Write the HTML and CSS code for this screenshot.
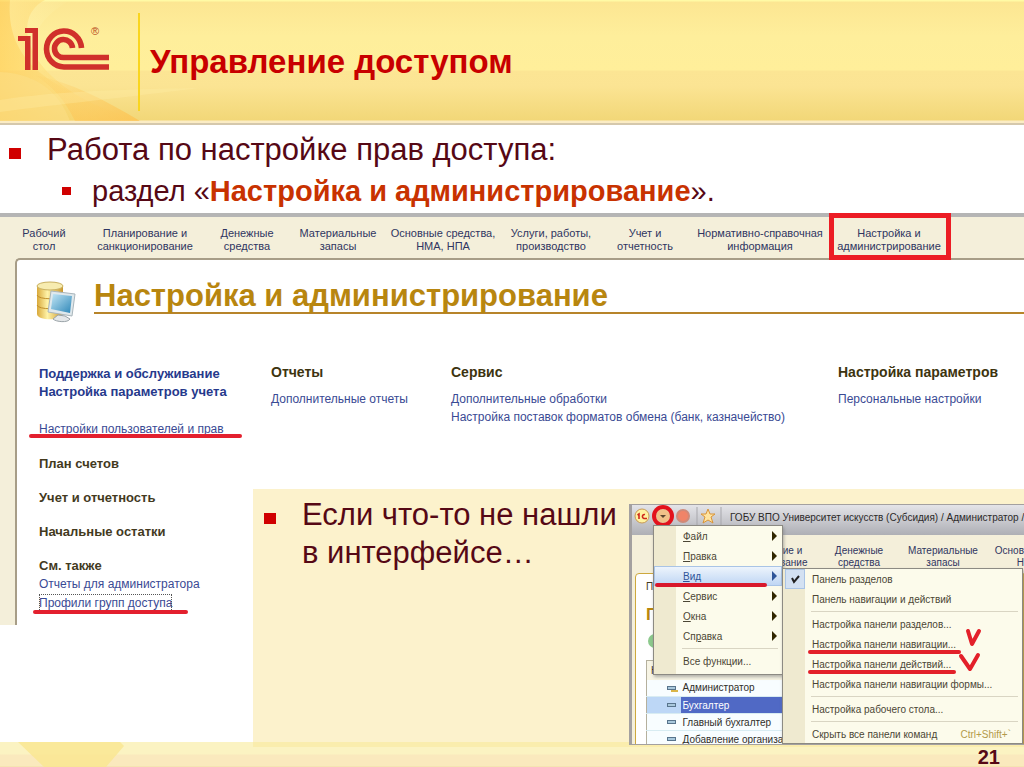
FILE: index.html
```html
<!DOCTYPE html>
<html lang="ru">
<head>
<meta charset="utf-8">
<title>Управление доступом</title>
<link rel="stylesheet" href="styles.css">
</head>
<body>
<div class="slide">
  <header class="slide-head">
    <svg class="head-art" viewBox="0 0 200 121" aria-hidden="true">
      <defs>
        <linearGradient id="fade" x1="0" x2="1"><stop offset="0" stop-color="#ffc94d" stop-opacity=".6"/><stop offset="1" stop-color="#ffd76a" stop-opacity="0"/></linearGradient>
        <linearGradient id="lightfade" x1="0" x2="1"><stop offset="0" stop-color="#fff3ae" stop-opacity=".5"/><stop offset="1" stop-color="#fff3ae" stop-opacity="0"/></linearGradient>
        <linearGradient id="lowfade" x1="0" x2="1" y1="0" y2="1"><stop offset="0" stop-color="#ffc95c" stop-opacity=".1"/><stop offset="1" stop-color="#ffc04c" stop-opacity=".7"/></linearGradient>
      </defs>
      <path d="M0 0H45C5 20 30 95 145 121H0Z" fill="url(#fade)"/>
      <path d="M10 0H70C20 30 25 60 75 95C50 80 5 60 10 0Z" fill="url(#lightfade)"/>
      <path d="M0 72C40 74 60 95 70 121H0Z" fill="#fbe08a" opacity=".5"/>
      <path d="M35 75C70 82 105 100 140 121H75C65 100 52 86 35 75Z" fill="url(#lowfade)"/>
      <path d="M0 100C40 94 80 90 200 88C120 98 60 104 0 112Z" fill="#fff0a8" opacity=".3"/>
    </svg>
    <div class="logo">
      <svg viewBox="0 0 92 44" width="92" height="44" role="img" aria-label="1С">
        <g fill="#d0302b">
          <path d="M7 0H20V42H14.500V5H7Z"/>
          <path d="M0 8H12.500V42H7V13H0Z"/>
        </g>
        <g fill="none" stroke="#d0302b" stroke-width="5.600">
          <path d="M63.500 20A17.500 18 0 1 0 46 39H91"/>
          <path d="M54.500 20A9 9 0 1 0 46 29.500H91"/>
        </g>
      </svg>
      <span class="reg">®</span>
    </div>
    <h1 class="slide-title">Управление доступом</h1>
  </header>

  <section class="intro">
    <p class="point">Работа по настройке прав доступа:</p>
    <p class="subpoint">раздел «<b>Настройка и администрирование</b>».</p>
  </section>

  <main class="stage">
    <section class="app">
      <nav class="sections">
        <a href="#">Рабочий<br>стол</a>
        <a href="#">Планирование и<br>санкционирование</a>
        <a href="#">Денежные<br>средства</a>
        <a href="#">Материальные<br>запасы</a>
        <a href="#">Основные средства,<br>НМА, НПА</a>
        <a href="#">Услуги, работы,<br>производство</a>
        <a href="#">Учет и<br>отчетность</a>
        <a href="#">Нормативно-справочная<br>информация</a>
        <a href="#" class="framed">Настройка и<br>администрирование</a>
      </nav>
      <div class="sheet">
        <div class="sheet-head">
          <svg viewBox="0 0 40 42" width="40" height="42" aria-hidden="true">
            <defs>
              <linearGradient id="cyl" x1="0" x2="1"><stop offset="0" stop-color="#d9a93a"/><stop offset=".4" stop-color="#fff3a8"/><stop offset="1" stop-color="#c9962c"/></linearGradient>
              <linearGradient id="scr" x1="0" y1="0" x2="1" y2="1"><stop offset="0" stop-color="#c2e6f5"/><stop offset="1" stop-color="#2e87b8"/></linearGradient>
            </defs>
            <path d="M1 5V33C1 40 27 40 27 33V5Z" fill="url(#cyl)"/>
            <ellipse cx="14" cy="5" rx="13" ry="4" fill="#f7ecb0" stroke="#c9b060"/>
            <path d="M1 14C2 19 26 19 27 14M1 24C2 29 26 29 27 24" fill="none" stroke="#c08f2b"/>
            <path d="M15 10L39 13L36 35L12 31Z" fill="#dfe8ec" stroke="#a9b5bb"/>
            <path d="M17 13L36 15L34 32L15 28Z" fill="url(#scr)"/>
            <path d="M22 34L29 35L34 38C32 42 20 41 17 38Z" fill="#e4e7e9" stroke="#9aa3a8"/>
          </svg>
          <h2>Настройка и администрирование</h2>
        </div>
        <div class="sheet-body">
          <nav class="side">
            <a href="#" class="strong">Поддержка и обслуживание</a>
            <a href="#" class="strong">Настройка параметров учета</a>
            <a href="#" class="marked users">Настройки пользователей и прав</a>
            <span class="group">План счетов</span>
            <span class="group">Учет и отчетность</span>
            <span class="group">Начальные остатки</span>
            <span class="group">См. также</span>
            <a href="#">Отчеты для администратора</a>
            <a href="#" class="marked focused">Профили групп доступа</a>
          </nav>
          <div class="column">
            <h3>Отчеты</h3>
            <a href="#">Дополнительные отчеты</a>
          </div>
          <div class="column">
            <h3>Сервис</h3>
            <a href="#">Дополнительные обработки</a>
            <a href="#">Настройка поставок форматов обмена (банк, казначейство)</a>
          </div>
          <div class="column">
            <h3>Настройка параметров</h3>
            <a href="#">Персональные настройки</a>
          </div>
        </div>
      </div>
    </section>

    <section class="note">
      <p class="point">Если что-то не нашли<br>в интерфейсе…</p>
      <div class="window">
        <div class="titlebar">
          <svg viewBox="0 0 94 26" width="94" height="26" aria-hidden="true">
            <circle cx="10" cy="12" r="7" fill="#fff2a0" stroke="#c99a55"/>
            <path d="M5.500 11L7 10V15M13 10.500A2 2 0 1 0 12 14.500H15" fill="none" stroke="#cf2a1c" stroke-width="1.600"/>
            <circle cx="31" cy="12" r="7" fill="#f1c189"/>
            <path d="M28 11H34L31 14Z" fill="#5d4630"/>
            <circle cx="31" cy="12" r="9" fill="none" stroke="#e3121c" stroke-width="4"/>
            <circle cx="51" cy="12" r="6" fill="#f08468" stroke="#cf8a78" stroke-width="2"/>
            <path d="M65 3V21M89 3V21" stroke="#a7a7ac"/>
            <path d="M76 5L78 10H83L79 13L81 19L76 16L71 19L73 13L69 10H74Z" fill="#ffe4a0" stroke="#d99438"/>
          </svg>
          <span>ГОБУ ВПО Университет искусств (Субсидия) / Администратор /</span>
        </div>
        <div class="backdrop">
          <nav class="mini-sections">
            <a href="#">Планирование и<br>санкционирование</a>
            <a href="#">Денежные<br>средства</a>
            <a href="#">Материальные<br>запасы</a>
            <a href="#">Основ<br>Н</a>
          </nav>
          <div class="mini-sheet">
            <span class="crumb">Пр</span>
            <span class="mini-title">П</span>
            <span class="plus"></span>
            <table class="roles">
              <thead><tr><th colspan="2">Н</th></tr></thead>
              <tbody>
                <tr><td><i class="dash key"></i></td><td>Администратор</td></tr>
                <tr class="selected"><td><i class="dash"></i></td><td>Бухгалтер</td></tr>
                <tr><td><i class="dash"></i></td><td>Главный бухгалтер</td></tr>
                <tr><td><i class="dash"></i></td><td>Добавление организа</td></tr>
              </tbody>
            </table>
          </div>
        </div>
        <div class="menu main-menu">
          <button class="more"><span><u>Ф</u>айл</span></button>
          <button class="more"><span><u>П</u>равка</span></button>
          <button class="more active"><span><u>В</u>ид</span></button>
          <button class="more"><span><u>С</u>ервис</span></button>
          <button class="more"><span><u>О</u>кна</span></button>
          <button class="more"><span>Сп<u>р</u>авка</span></button>
          <hr>
          <button><span>Все функции...</span></button>
        </div>
        <div class="menu sub-menu">
          <button class="checked"><svg class="tick" viewBox="0 0 18 18" width="18" height="18" aria-hidden="true"><path d="M6 8L8 12L13 6" fill="none" stroke="#222" stroke-width="2"/></svg><span>Панель разделов</span></button>
          <button><span>Панель навигации и действий</span></button>
          <hr>
          <button><span>Настройка панели разделов...</span></button>
          <button class="struck"><span>Настройка панели навигации...</span></button>
          <button class="struck"><span>Настройка панели действий...</span></button>
          <button><span>Настройка панели навигации формы...</span></button>
          <hr>
          <button><span>Настройка рабочего стола...</span></button>
          <hr>
          <button><span>Скрыть все панели команд</span><kbd>Ctrl+Shift+`</kbd></button>
          <svg class="ticks" viewBox="0 0 26 48" width="26" height="48" aria-hidden="true">
            <path d="M11 4L15 17L22 4M4 29L13 42L21 28" fill="none" stroke="#e3202a" stroke-width="4" stroke-linecap="round" stroke-linejoin="round"/>
          </svg>
        </div>
      </div>
    </section>
  </main>

  <footer class="slide-foot">
    <svg viewBox="0 0 130 25" width="130" height="25" aria-hidden="true"><path d="M18 0H120L124 4L106 25H44Z" fill="#fae58c" opacity=".75"/></svg>
    <span>21</span>
  </footer>
</div>
</body>
</html>
```
FILE: styles.css
```css
* { box-sizing: border-box; }
body {
  margin: 0;
  font-family: "Liberation Sans", Arial, sans-serif;
  color: #560815;
  background: #fff;
}
h1, h2, h3, p { margin: 0; }
a { text-decoration: none; color: inherit; }

.slide {
  min-height: 100vh;
  display: flex;
  flex-direction: column;
  overflow: hidden;
}

/* Header band */
.slide-head {
  position: relative;
  display: flex;
  align-items: center;
  height: 125px;
  border-bottom: 2px solid #d5c8ac;
  background: linear-gradient(#fffaa5 0 1px, #fce692 2px, #feee9b 36px, #ffef9a 70px, #fce594 71px, #fbe493 86px, #f2d778 120px, #fbecc4 121px);
}
.head-art { position: absolute; left: 0; top: 0; width: 200px; height: 121px; }
.logo {
  position: relative;
  display: flex;
  align-items: flex-start;
  width: 140px;
  height: 98px;
  padding: 15px 0 0 18px;
  border-right: 2px solid #f9d51f;
}
.reg { position: absolute; left: 91px; top: 12px; font-size: 11px; color: #b84a20; }
.slide-title { position: relative; padding-left: 10px; font-size: 33px; line-height: 40px; color: #c80000; }

/* Bullets */
.intro { height: 88px; padding: 5px 0 0; }
.point {
  position: relative;
  padding-left: 47px;
  font-size: 31px;
  line-height: 40px;
}
.point::before {
  content: "";
  position: absolute;
  left: 9px;
  top: 18px;
  width: 12px;
  height: 11px;
  background: #d00000;
}
.subpoint { position: relative; padding-left: 92px; font-size: 29px; line-height: 42px; }
.subpoint::before {
  content: "";
  position: absolute;
  left: 62px;
  top: 17px;
  width: 9px;
  height: 8px;
  background: #d00000;
}
.subpoint b { color: #c83200; }

/* Application screen */
.stage { position: relative; flex: 1; }
.app { height: 412px; padding-left: 15px; border-top: 4px solid #b5b5b5; background: #f4efda; }
.sections {
  display: grid;
  grid-template-columns: 58px 144px 60px 122px 88px 128px 60px 170px 88px;
  height: 41px;
  padding-top: 5px;
  align-items: center;
  font-size: 11px;
  line-height: 13px;
  text-align: center;
  white-space: nowrap;
  color: #2f3561;
}
.sections a { position: relative; display: flex; justify-content: center; }
.framed::after {
  content: "";
  position: absolute;
  inset: -14px -18px -7px -16px;
  border: 5px solid #ec1c24;
}
.sheet {
  height: 367px;
  border-top: 2px solid #a79d87;
  border-left: 2px solid #a79d87;
  border-radius: 5px 0 0;
  background: #fff;
}
.sheet-head { display: flex; align-items: flex-start; gap: 18px; padding: 19px 0 0 19px; }
.sheet-head svg { margin-top: 2px; }
.sheet-head h2 {
  flex: 1;
  font-size: 31px;
  line-height: 33px;
  border-bottom: 2px solid #b7842a;
  color: #b8860f;
}
.sheet-body {
  display: grid;
  grid-template-columns: 232px 180px 387px 1fr;
  padding: 40px 0 0 22px;
  font-size: 12px;
  line-height: 18px;
  white-space: nowrap;
}
.side { display: flex; flex-direction: column; align-items: flex-start; padding-top: 2px; color: #3a4a94; }
.side .strong { font-size: 13px; font-weight: bold; color: #26398c; }
.group { margin-top: 16px; font-size: 13px; font-weight: bold; color: #433a1e; }
.marked { position: relative; }
.users { margin: 19px 0 1px; }
.marked::after {
  content: "";
  position: absolute;
  left: -10px;
  right: -18px;
  bottom: 0;
  height: 4px;
  border-radius: 2px;
  background: #e3202e;
}
.focused { margin-top: 1px; outline: 1px dotted #555; outline-offset: -1px; }
.focused::after { left: -6px; right: -16px; bottom: -2px; }
.column { display: flex; flex-direction: column; color: #3a4a94; }
.column h3 { margin-bottom: 9px; font-size: 14px; line-height: 18px; color: #3d340f; }

/* Lower note with the menu window */
.note {
  position: absolute;
  left: 253px;
  right: 0;
  top: 276px;
  display: grid;
  grid-template-columns: 376px 1fr;
  height: 258px;
  background: #fcf2cc;
  border-bottom: 5px solid #faedad;
}
.note .point { padding: 7px 0 0 49px; line-height: 38px; white-space: nowrap; }
.note .point::before { left: 11px; top: 24px; }
.window {
  position: relative;
  display: flex;
  flex-direction: column;
  height: 241px;
  margin-top: 15px;
  overflow: hidden;
  border: solid #a3a0a0;
  border-width: 1px 0 1px 3px;
  font-size: 10px;
  line-height: 13px;
  white-space: nowrap;
  background: #fff;
}
.titlebar {
  display: flex;
  align-items: center;
  gap: 4px;
  height: 30px;
  padding-bottom: 6px;
  background: linear-gradient(#e4e4e8, #aeafb5);
  color: #2c2a2a;
}
.titlebar svg { flex: none; }
.backdrop { flex: 1; display: flex; flex-direction: column; background: #f4efda; }
.mini-sections {
  display: grid;
  grid-template-columns: 106px 84px 84px 1fr;
  padding: 10px 0 0 79px;
  height: 38px;
  line-height: 12px;
  text-align: center;
  color: #2f3561;
}
.mini-sections a:last-child { text-align: right; }
.mini-sheet {
  flex: 1;
  display: flex;
  flex-direction: column;
  align-items: flex-start;
  margin-left: 3px;
  padding: 6px 0 0 10px;
  border: 1px solid #cda83d;
  border-radius: 4px 0 0;
  background: #fff;
  color: #443b22;
}
.mini-title { margin-top: 12px; font-size: 17px; line-height: 20px; font-weight: bold; color: #b8860f; }
.plus { width: 14px; height: 14px; margin: 9px 0 12px 2px; border-radius: 50%; background: #8cc98c; }
.roles { width: 300px; border-collapse: collapse; border-left: 1px solid #b5b09d; color: #302e29; }
.roles th { height: 19px; padding: 0 4px; text-align: left; font-weight: normal; border-top: 1px solid #b5b09d; background: #f7f4e4; }
.roles td { height: 17px; padding: 0 2px; border-bottom: 1px solid #d8ecf2; background: #f8fdff; }
.roles td:first-child { width: 34px; padding-left: 20px; }
.roles .selected td { color: #fff; background: #5069c5; }
.roles .selected td:first-child { background: #bdd7f6; }
.dash { display: block; width: 9px; height: 4px; border: 1px solid #58748c; background: #a9c8dc; }
.key { box-shadow: 3px 3px 0 -1px #d9b548; }

.menu {
  position: absolute;
  border: 1px solid #8c8a83;
  background: linear-gradient(90deg, #efead0 0 22px, #fcfbeb 22px);
  box-shadow: 1px 2px 3px #77777788;
}
.menu button {
  position: relative;
  display: flex;
  align-items: center;
  width: 100%;
  height: 20px;
  padding: 0 4px 0 28px;
  border: 1px solid transparent;
  background: none;
  font: inherit;
  line-height: 13px;
  text-align: left;
  color: #4b4635;
}
.menu hr { margin: 2px 4px 2px 28px; border: 0; border-top: 1px solid #d9d5c3; }
.main-menu { left: 21px; top: 20px; width: 130px; height: 150px; }
.main-menu .more::after {
  content: "";
  margin-left: auto;
  border: 5px solid transparent;
  border-left-color: #302600;
  border-right-width: 0;
}
.main-menu .active { border-color: #a9c4e6; background: linear-gradient(#edf4fc, #bfd6f4); color: #2f5599; }
.main-menu .active::before {
  content: "";
  position: absolute;
  left: 0;
  right: 14px;
  bottom: -2px;
  height: 4px;
  border-radius: 2px;
  background: #d8182c;
}
.main-menu .active.more::after { border-left-color: #2f5599; }
.sub-menu { left: 150px; right: 1px; top: 63px; height: 176px; }
.sub-menu button { padding-right: 10px; }
.tick { position: absolute; left: 2px; top: 0; background: #d3e1f2; outline: 1px solid #a9c4e6; }
.struck span { position: relative; }
.struck span::after {
  content: "";
  position: absolute;
  left: -4px;
  right: -5px;
  bottom: -3px;
  height: 4px;
  border-radius: 2px;
  background: #e3202a;
}
kbd { margin-left: auto; font: inherit; color: #b39a4a; }
.ticks { position: absolute; left: 174px; top: 58px; }

/* Footer band */
.slide-foot {
  display: flex;
  justify-content: space-between;
  align-items: center;
  height: 25px;
  padding-right: 24px;
  background: linear-gradient(#fbf3c2 0 12px, #fae9bd 13px 24px, #f0dfa5);
  font-size: 20px;
  font-weight: bold;
}
.slide-foot span { padding-top: 6px; }
```
